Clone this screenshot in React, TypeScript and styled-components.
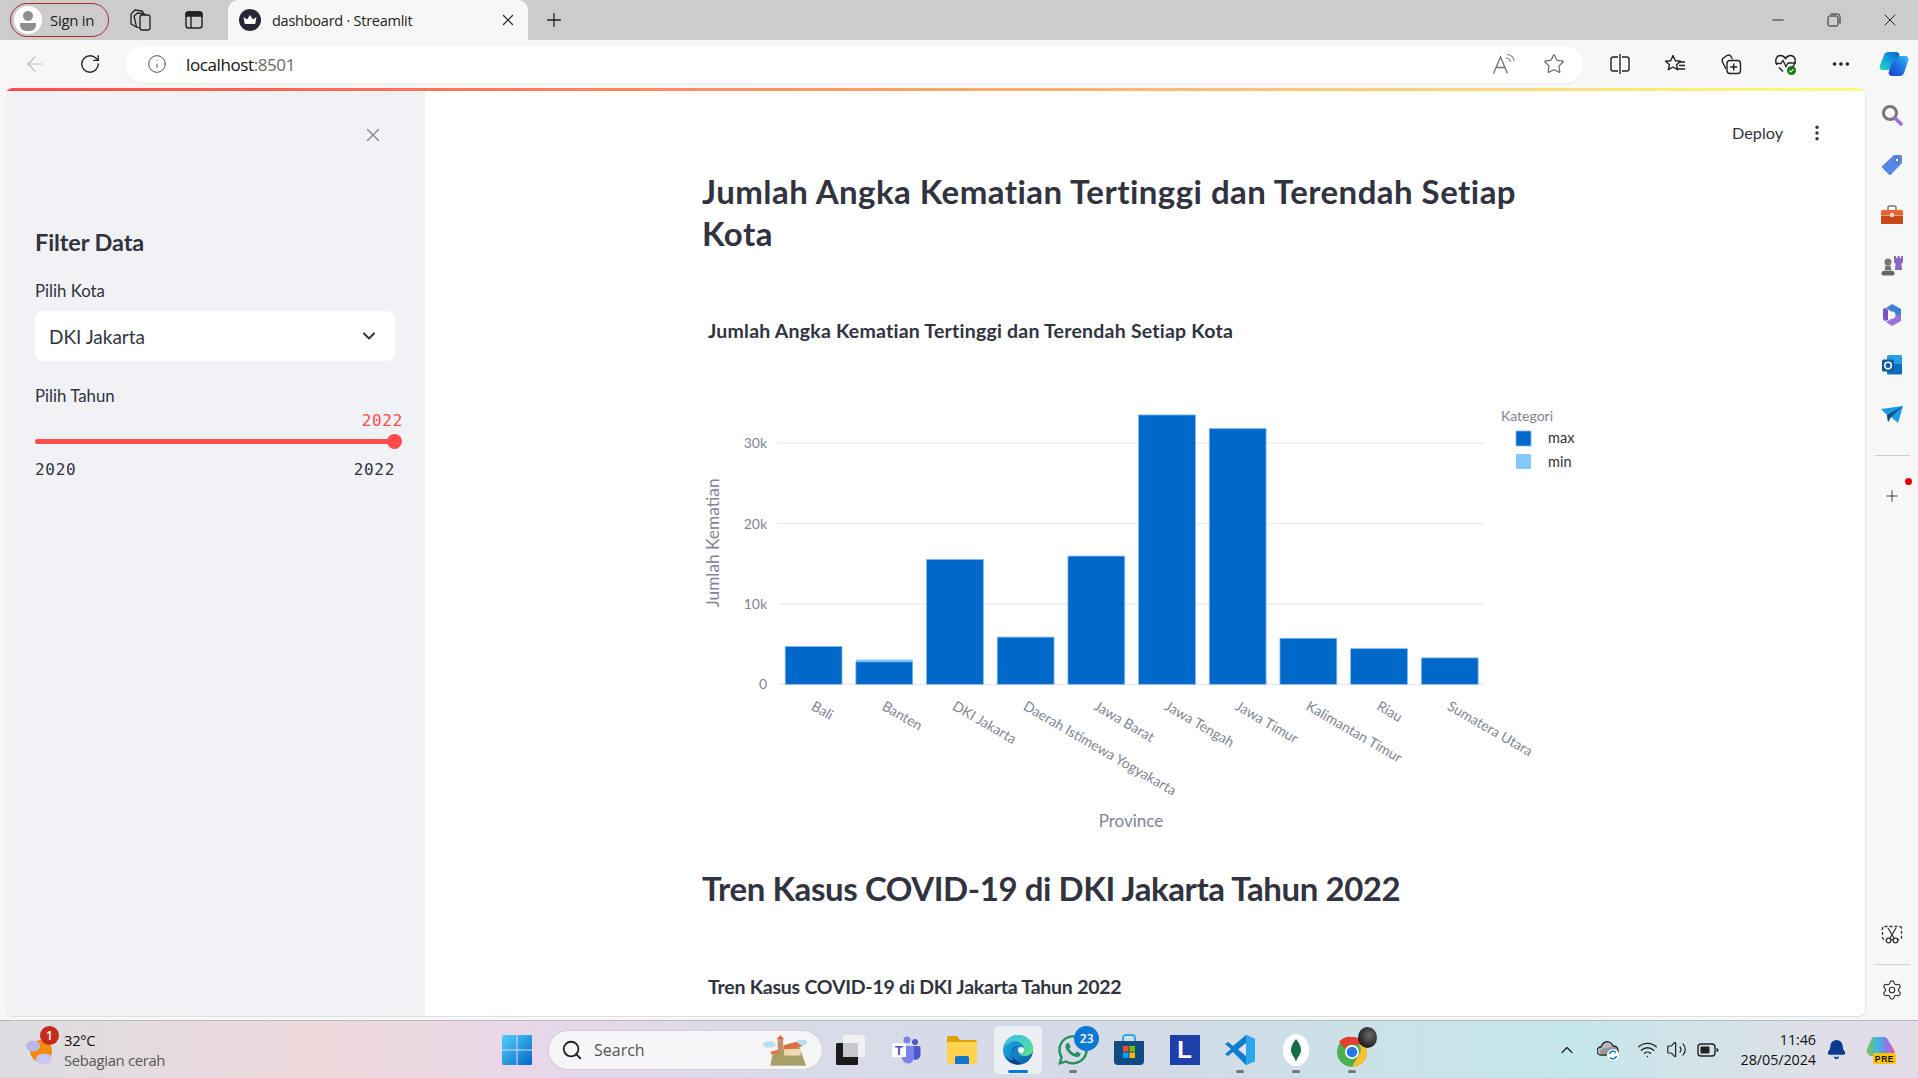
import React from 'react';
import styled, { createGlobalStyle } from 'styled-components';
import {
  ArrowLeft, Bell, ChevronDown, ChevronUp, EllipsisVertical, Ellipsis, Info, Minus, Plus, RotateCw,
  Search, Settings, Star, Volume2, Wifi, X,
} from 'lucide-react';
import { FaWhatsapp } from 'react-icons/fa';

const SANS = `Lato, "Noto Sans", sans-serif`;
const UI = `"Open Sans", "Noto Sans", sans-serif`;
const MONO = `"DejaVu Sans Mono", monospace`;

const GlobalStyle = createGlobalStyle`
  html, body { margin: 0; padding: 0; height: 100%; overflow: hidden; }
  * { box-sizing: border-box; }
  body { font-family: ${SANS}; color: #31333f; }
`;

const Browser = styled.div`
  width: 1918px;
  height: 1078px;
  display: flex;
  flex-direction: column;
  background: #f7f7f7;
`;

/* ---------- tab strip ---------- */
const TabStrip = styled.div`
  height: 40px;
  background: #cccccc;
  display: flex;
  align-items: center;
  padding-left: 10px;
  flex: none;
`;
const SignIn = styled.div`
  width: 99px;
  height: 34px;
  border: 1.5px solid #b02a2a;
  border-radius: 17px;
  display: flex;
  align-items: center;
  gap: 8px;
  padding-left: 3px;
  font: 400 15px ${UI};
  letter-spacing: -0.3px;
  color: #222;
`;
const Slot = styled.div<{ $w: number; $ml?: number }>`
  width: ${p => p.$w}px;
  margin-left: ${p => p.$ml ?? 0}px;
  height: 100%;
  flex: none;
  display: flex;
  align-items: center;
  justify-content: center;
  position: relative;
`;
const Tab = styled.div`
  width: 300px;
  height: 40px;
  background: #f7f7f7;
  border-radius: 10px 10px 0 0;
  display: flex;
  align-items: center;
  padding-left: 11px;
  flex: none;
`;
const TabTitle = styled.span`
  font: 400 14.5px ${UI};
  letter-spacing: -0.25px;
  color: #222;
  margin-left: 11px;
  flex: 1;
`;
const TabClose = styled.div`
  width: 40px;
  display: flex;
  justify-content: center;
`;
const WindowControls = styled.div`
  margin-left: auto;
  height: 100%;
  display: flex;
`;

/* ---------- address bar ---------- */
const Toolbar = styled.div`
  height: 48px;
  flex: none;
  display: flex;
  align-items: center;
  padding-left: 8px;
  background: #f7f7f7;
`;
const AddressBar = styled.div`
  width: 1459px;
  height: 37px;
  margin: 0 8px 0 8px;
  background: #fff;
  border-radius: 19px;
  box-shadow: 0 1px 2px rgba(0, 0, 0, 0.06);
  display: flex;
  align-items: center;
  padding-left: 22px;
  flex: none;
`;
const Url = styled.span`
  font: 400 17px ${UI};
  letter-spacing: -0.4px;
  color: #111;
  margin-left: 19px;
  flex: 1;
  span { color: #6a6a6a; }
`;

/* ---------- page ---------- */
const Body = styled.div`
  flex: 1;
  min-height: 0;
  display: flex;
  padding-left: 5px;
`;
const Page = styled.div`
  width: 1861px;
  height: 929px;
  background: #fff;
  border-radius: 8px;
  border-bottom: 1px solid #dedede;
  border-right: 1px solid #e6e6e6;
  overflow: hidden;
  display: flex;
  flex-direction: column;
  flex: none;
`;
const Decoration = styled.div`
  height: 3px;
  flex: none;
  background: linear-gradient(90deg, #ff4b4b, #fffd80);
`;
const Columns = styled.div`
  flex: 1;
  min-height: 0;
  display: flex;
`;

const Sidebar = styled.aside`
  width: 420px;
  flex: none;
  background: #f0f2f6;
  padding: 0 30px;
`;
const CloseRow = styled.div`
  height: 24px;
  margin: 33px 11px 0 0;
  display: flex;
  justify-content: flex-end;
  color: #808495;
`;
const FilterTitle = styled.h3`
  margin: 79px 0 0;
  height: 30px;
  font: 700 23.5px/30px ${SANS};
  letter-spacing: -0.1px;
  color: #31333f;
`;
const FieldLabel = styled.label<{ $top: number }>`
  display: block;
  margin-top: ${p => p.$top}px;
  height: 20px;
  font: 400 16.8px/20px ${SANS};
  color: #31333f;
`;
const Select = styled.div`
  margin-top: 10px;
  height: 50px;
  background: #fff;
  border-radius: 8px;
  display: flex;
  align-items: center;
  justify-content: space-between;
  padding: 0 16px 0 14px;
  font: 400 19px ${SANS};
  color: #31333f;
`;
const SliderValue = styled.div`
  margin: 5px -8px 0 0;
  height: 20px;
  text-align: right;
  font: 400 16px/20px ${MONO};
  letter-spacing: 0.7px;
  color: #ff4b4b;
`;
const SliderTrack = styled.div`
  position: relative;
  height: 5px;
  margin: 8px 0 5px;
  border-radius: 3px;
  background: #ff4b4b;
`;
const SliderThumb = styled.div`
  position: absolute;
  right: -7px;
  top: -5px;
  width: 15px;
  height: 15px;
  border-radius: 50%;
  background: #ff4b4b;
`;
const SliderEnds = styled.div`
  margin-top: 16px;
  display: flex;
  justify-content: space-between;
  font: 400 16px/20px ${MONO};
  letter-spacing: 0.7px;
  color: #31333f;
`;

const Main = styled.main`
  position: relative;
  flex: 1;
  min-width: 0;
  overflow: hidden;
`;
const StreamlitHeader = styled.div`
  position: absolute;
  top: 30px;
  right: 38px;
  display: flex;
  align-items: center;
  gap: 24px;
  font: 400 16.2px/24px ${SANS};
  color: #31333f;
`;
const Content = styled.div`
  width: 886px;
  margin: 0 auto;
  padding-top: 80px;
`;
const Heading = styled.h2<{ $tracking: number }>`
  margin: 0;
  width: 840px;
  font: 700 33px/41.5px ${SANS};
  letter-spacing: ${p => p.$tracking}px;
  color: #31333f;
`;
const ChartTitle = styled.h3<{ $tracking: number }>`
  margin: 65px 0 1px 6px;
  height: 24px;
  font: 700 19.5px/24px ${SANS};
  letter-spacing: ${p => p.$tracking}px;
  color: #31333f;
`;
const ChartSvg = styled.svg`
  display: block;
  width: 886px;
  height: 510px;
  margin-bottom: 14px;
`;

/* ---------- extensions rail ---------- */
const Rail = styled.div`
  flex: 1;
  display: flex;
  flex-direction: column;
  justify-content: space-between;
  align-items: center;
  padding: 2px 0 5px;
`;
const RailGroup = styled.div`
  display: flex;
  flex-direction: column;
  align-items: center;
`;
const RailItem = styled.div<{ $h?: number }>`
  position: relative;
  height: ${p => p.$h ?? 50}px;
  width: 52px;
  display: flex;
  align-items: center;
  justify-content: center;
`;
const RailRule = styled.div`
  width: 35px;
  height: 1px;
  background: #cfcfcf;
  flex: none;
`;
const RedDot = styled.span`
  position: absolute;
  top: 22px;
  right: 6px;
  width: 7px;
  height: 7px;
  border-radius: 50%;
  background: #e60000;
`;

/* ---------- taskbar ---------- */
const Taskbar = styled.div`
  height: 58px;
  flex: none;
  border-top: 1px solid #b7b9c2;
  background: linear-gradient(90deg, #dcdde2 0%, #efd9dc 17%, #e6d7ea 29%, #d9dce8 42%, #d3dbe6 60%, #c4e7ea 82%, #dde0e7 94%, #e2dbe8 100%);
  display: flex;
  align-items: center;
`;
const Weather = styled.div`
  width: 490px;
  flex: none;
  display: flex;
  align-items: center;
  padding-left: 25px;
  gap: 9px;
  position: relative;
`;
const WeatherText = styled.div`
  font: 400 14.8px/20px ${UI};
  letter-spacing: -0.3px;
  color: #111;
  small { display: block; font-size: 14.8px; color: #555; }
`;
const Badge = styled.span<{ $bg: string; $size: number; $top: number; $right: number }>`
  position: absolute;
  top: ${p => p.$top}px;
  right: ${p => p.$right}px;
  min-width: ${p => p.$size}px;
  height: ${p => p.$size}px;
  border-radius: 50%;
  background: ${p => p.$bg};
  color: #fff;
  font: 600 12px/${p => p.$size}px ${UI};
  text-align: center;
`;
const SearchBox = styled.div`
  width: 273px;
  height: 38px;
  margin: 0 1px 0 5px;
  flex: none;
  border-radius: 19px;
  background: #f6f6f8;
  box-shadow: 0 0 0 1px #d0d1d8;
  display: flex;
  align-items: center;
  padding: 0 14px 0 12px;
  gap: 11px;
  font: 400 16px ${UI};
  color: #555;
  span { flex: 1; }
`;
const TaskSlot = styled.div<{ $active?: boolean; $running?: boolean }>`
  position: relative;
  width: 55.67px;
  height: 48px;
  flex: none;
  display: flex;
  align-items: center;
  justify-content: center;
  border-radius: 5px;
  ${p => p.$active && `background: rgba(255,255,255,.55); width: 48px; margin: 0 3.8px;`}
  &::after {
    content: '';
    display: ${p => (p.$active || p.$running ? 'block' : 'none')};
    position: absolute;
    bottom: 1px;
    left: 50%;
    transform: translateX(-50%);
    width: ${p => (p.$active ? 20 : 8)}px;
    height: 3px;
    border-radius: 2px;
    background: ${p => (p.$active ? '#0a78d4' : '#777')};
  }
`;
const LogoL = styled.div`
  width: 30px;
  height: 30px;
  background: #1f3faa;
  color: #fff;
  font: 700 24px/30px "Liberation Sans", sans-serif;
  text-align: center;
`;
const Tray = styled.div`
  margin-left: auto;
  display: flex;
  align-items: center;
  padding-right: 12px;
`;
const TrayIcon = styled.div<{ $w: number }>`
  width: ${p => p.$w}px;
  display: flex;
  justify-content: center;
`;
const Clock = styled.div`
  width: 92px;
  text-align: right;
  font: 400 14.4px/20px ${UI};
  letter-spacing: -0.1px;
  color: #111;
`;
const ChromeAvatar = styled.span`
  position: absolute;
  top: 1px;
  right: 3px;
  width: 19px;
  height: 21px;
  border-radius: 50%;
  background: radial-gradient(circle at 60% 40%, #6a6a6a, #1e1e1e 70%);
`;

/* ---------- drawn icons ---------- */
const Favicon = () => (
  <svg width="22" height="22" viewBox="0 0 22 22">
    <circle cx="11" cy="11" r="11" fill="#262634" />
    <path d="M4.500 8l3.500 2.600L11 6l3 4.600L17.500 8l-1.300 7H5.800z" fill="#fff" />
  </svg>
);
const Avatar = () => (
  <svg width="28" height="28" viewBox="0 0 28 28">
    <circle cx="14" cy="14" r="14" fill="#fff" />
    <circle cx="14" cy="10" r="5" fill="#8f8f8f" />
    <path d="M6 17h16v2a6 6 0 0 1-6 6h-4a6 6 0 0 1-6-6z" fill="#8f8f8f" />
  </svg>
);
const CollectionsTabs = () => (
  <svg width="24" height="24" viewBox="0 0 24 24" fill="none" stroke="#222" strokeWidth="1.300" strokeLinejoin="round">
    <rect x="11" y="7" width="10" height="15" rx="2" />
    <path d="M11 20l-3.500-1L5 8l3.500-3 7 1 1 1" />
    <path d="M7.500 19L2 16 2 6l4-4 7 1 1.500 2" />
  </svg>
);
const VerticalTabs = () => (
  <svg width="20" height="20" viewBox="0 0 20 20" fill="none" stroke="#222" strokeWidth="1.400">
    <rect x="2" y="2" width="16" height="16" rx="2.500" />
    <path d="M2 4.500a2.500 2.500 0 0 1 2.500-2.500h11A2.500 2.500 0 0 1 18 4.500V6H2z" fill="#222" />
    <path d="M7 6v12" />
  </svg>
);
const Restore = () => (
  <svg width="14" height="14" viewBox="0 0 14 14" fill="none" stroke="#222" strokeWidth="1">
    <rect x="1" y="3" width="10" height="10" rx="1.500" />
    <path d="M3.500 1h7a2.500 2.500 0 0 1 2.500 2.500v7" />
  </svg>
);
const ReadAloud = () => (
  <svg width="24" height="22" viewBox="0 0 24 22" fill="none" stroke="#777" strokeWidth="1.400">
    <path d="M1.500 20.500L8.500 4l7 16.500M4 14.500h9" />
    <path d="M14 5c2.500.2 4 1.500 4.500 4M15 1.500c3.800.3 6.500 2.600 7 6.500" strokeWidth="1.100" />
  </svg>
);
const SplitScreen = () => (
  <svg width="20" height="22" viewBox="0 0 20 22" fill="none" stroke="#222" strokeWidth="1.400">
    <path d="M8 4H3a2 2 0 0 0-2 2v10a2 2 0 0 0 2 2h5M12 4h5a2 2 0 0 1 2 2v10a2 2 0 0 1-2 2h-5" />
    <path d="M10 1v20" />
  </svg>
);
const Favorites = () => (
  <svg width="22" height="22" viewBox="0 0 22 22" fill="none" stroke="#222" strokeWidth="1.400">
    <path d="M9 2.500l2.300 5.200 5.200.5-3.900 3.500 1 5-4.600-2.700-4.600 2.700 1-5.200L1.500 8.200l5.200-.5z" strokeLinejoin="round" />
    <path d="M15 9h6M15 12.500h6M13 16h8" />
  </svg>
);
const Collections = () => (
  <svg width="22" height="22" viewBox="0 0 22 22" fill="none" stroke="#222" strokeWidth="1.400">
    <path d="M6 16L2.500 9c-1-2 0-3.500 1.500-4.500l3-2c1.500-.8 3-.5 4 1L12.500 6" />
    <rect x="7" y="7.500" width="13.500" height="13" rx="3" />
    <path d="M13.700 10.500v7M10.200 14h7" />
  </svg>
);
const HeartPulse = () => (
  <svg width="24" height="24" viewBox="0 0 24 24" fill="none">
    <path d="M3 13C.5 9 2 3.500 6.500 3.500c2.500 0 4 1.500 5 3 1-1.500 2.800-3 5-3 4.500 0 6 5 3.500 9.500l-2 2.500M5 15.500l4 4" stroke="#222" strokeWidth="1.400" />
    <path d="M1.500 11.500H7l2-3 3 6 2-3.500h8" stroke="#222" strokeWidth="1.300" />
    <circle cx="17.500" cy="18.500" r="4.500" fill="#107c10" />
    <path d="M15.500 18.500l1.500 1.500 2.500-2.800" stroke="#fff" strokeWidth="1.100" />
  </svg>
);
const Copilot = ({ size }: { size: number }) => (
  <svg width={size} height={size} viewBox="0 0 30 30">
    <defs>
      <linearGradient id="cpA" x1="0" y1="1" x2="1" y2="0">
        <stop offset="0" stopColor="#22dcc0" />
        <stop offset=".6" stopColor="#1490e0" />
        <stop offset="1" stopColor="#0f5fb8" />
      </linearGradient>
      <linearGradient id="cpB" x1="0" y1="1" x2="1" y2="0">
        <stop offset="0" stopColor="#2238c8" />
        <stop offset=".6" stopColor="#1f7fe8" />
        <stop offset="1" stopColor="#38c8f5" />
      </linearGradient>
    </defs>
    <path d="M9 3h8c2 0 3 1 3.500 3L17 18c-.5 2-1.500 3-3.500 3H4c-3 0-4-2-3-5L5 6c.8-2 2-3 4-3z" fill="url(#cpA)" />
    <path d="M20 7h6c3 0 4 2 3 5l-4 12c-.8 2-2 3-4 3h-8c-2 0-3-1-3.500-3L13 14c.5-2 1.500-3 3.500-3z" fill="url(#cpB)" />
  </svg>
);
const CopilotPre = () => (
  <svg width="30" height="28" viewBox="0 0 30 28">
    <defs>
      <linearGradient id="cpC" x1="0" y1="0" x2="1" y2="0">
        <stop offset="0" stopColor="#8ac04a" />
        <stop offset=".4" stopColor="#36b8e8" />
        <stop offset=".7" stopColor="#8a7ae0" />
        <stop offset="1" stopColor="#e05cc0" />
      </linearGradient>
    </defs>
    <path d="M8 1h10c2 0 3 1 4 3l6 10c1 2 1 4-1 6H4C1 18 0 15 1 13l4-9c1-2 1-3 3-3z" fill="url(#cpC)" />
    <rect x="7" y="17" width="23" height="11" rx="2" fill="#ffc400" />
    <text x="18.500" y="26" textAnchor="middle" fontFamily="Liberation Sans" fontWeight="700" fontSize="8.500" letterSpacing=".6" fill="#111">PRE</text>
  </svg>
);
const RailSearch = () => (
  <svg width="22" height="22" viewBox="0 0 22 22" fill="none">
    <circle cx="9" cy="9" r="6.500" stroke="#777" strokeWidth="3" />
    <path d="M14 14l6 6" stroke="#9a6fd0" strokeWidth="3.500" strokeLinecap="round" />
  </svg>
);
const RailTag = () => (
  <svg width="22" height="22" viewBox="0 0 22 22">
    <path d="M13 1h6.500A1.500 1.500 0 0 1 21 2.500V9L10 20.500c-.7.700-1.500.7-2.200 0L1.500 14c-.7-.7-.7-1.500 0-2.200z" fill="#5686e3" />
    <circle cx="16" cy="6" r="2" fill="#fff" stroke="#2f57ac" />
  </svg>
);
const RailToolbox = () => (
  <svg width="24" height="22" viewBox="0 0 24 22">
    <path d="M8 6V3.500A1.500 1.500 0 0 1 9.500 2h5A1.500 1.500 0 0 1 16 3.500V6" fill="none" stroke="#777" strokeWidth="1.500" />
    <path d="M1 7.500A1.500 1.500 0 0 1 2.500 6h19A1.500 1.500 0 0 1 23 7.500V11H1z" fill="#e8622c" />
    <path d="M1 11.500h22V19a1 1 0 0 1-1 1H2a1 1 0 0 1-1-1z" fill="#c9481a" />
    <rect x="10" y="9" width="4" height="4" rx="1" fill="#d8d8d8" />
  </svg>
);
const RailChess = () => (
  <svg width="24" height="24" viewBox="0 0 24 24">
    <path d="M14 3h2v2h1.500V3h2v2H21V3h2v6l-1.500 2 .5 6H15l.500-6L14 9z" fill="#8a68c0" />
    <circle cx="8" cy="9" r="3.500" fill="#777" />
    <path d="M5.500 12.500h5l1 5H4.500z" fill="#777" />
    <rect x="1.500" y="18" width="13" height="4.500" rx="2" fill="#666" />
  </svg>
);
const Rail365 = () => (
  <svg width="22" height="24" viewBox="0 0 22 24" fill="none">
    <path d="M11 1l9 5v6H14c0-2-1-3-3-3L5 5z" fill="#3f7fd8" />
    <path d="M2 6l3-1 2 2v10l-3 1-2-2z" fill="#7a52c4" />
    <path d="M20 12v6l-9 5-6-4 5-3c2 0 4-1 4-4z" fill="#9a70dc" />
    <circle cx="11" cy="12" r="3.500" fill="#f7f7f7" />
  </svg>
);
const RailOutlook = () => (
  <svg width="22" height="22" viewBox="0 0 22 22">
    <rect x="6" y="1" width="15" height="19" rx="1.500" fill="#2a9de4" />
    <path d="M6 10l15 0v9a1.500 1.500 0 0 1-1.500 1.500H7.500A1.500 1.500 0 0 1 6 19z" fill="#0f6cbd" />
    <rect x="1" y="5.500" width="12" height="12" rx="1.500" fill="#0a5a9e" />
    <circle cx="7" cy="11.500" r="3.300" fill="none" stroke="#fff" strokeWidth="1.600" />
  </svg>
);
const RailSend = () => (
  <svg width="22" height="18" viewBox="0 0 22 18">
    <path d="M0 3l22-3-5 17-7-6-3 5-1-7z" fill="#1c9be6" />
    <path d="M6 9l16-9-12 11-3 5z" fill="#14507e" />
  </svg>
);
const RailCapture = () => (
  <svg width="22" height="20" viewBox="0 0 22 20" fill="none" stroke="#333" strokeWidth="1.300">
    <rect x="1.500" y="1.500" width="19" height="13" rx="2" strokeDasharray="3 2" />
    <path d="M7 3l6 10M15 3L9 13" />
    <circle cx="7.500" cy="15.500" r="2.300" fill="#f7f7f7" />
    <circle cx="14.500" cy="15.500" r="2.300" fill="#f7f7f7" />
  </svg>
);
const WeatherIcon = () => (
  <svg width="30" height="32" viewBox="0 0 30 32">
    <circle cx="16" cy="17" r="11" fill="#f58a12" />
    <ellipse cx="8" cy="12" rx="7" ry="5.500" fill="#b9b8ec" />
    <ellipse cx="19" cy="25" rx="8" ry="5.500" fill="#c9c7f2" />
  </svg>
);
const StartLogo = () => (
  <svg width="30" height="30" viewBox="0 0 30 30">
    <defs>
      <linearGradient id="win" x1="0" y1="0" x2="1" y2="1">
        <stop offset="0" stopColor="#4fd0fb" />
        <stop offset="1" stopColor="#0569c8" />
      </linearGradient>
    </defs>
    <path d="M0 1.500A1.500 1.500 0 0 1 1.500 0h13v14.500H0zM15.500 0h13A1.500 1.500 0 0 1 30 1.500v13H15.500zM0 15.500h14.500V30h-13A1.500 1.500 0 0 1 0 28.500zM15.500 15.500H30v13a1.500 1.500 0 0 1-1.500 1.500h-13z" fill="url(#win)" />
  </svg>
);
const SearchScene = () => (
  <svg width="46" height="34" viewBox="0 0 50 34">
    <ellipse cx="8" cy="11" rx="7" ry="3.500" fill="#b9dff2" />
    <ellipse cx="43" cy="9" rx="6" ry="3.500" fill="#b9dff2" />
    <path d="M9 34l3-16 28-6 8 22z" fill="#a8a068" />
    <rect x="17" y="4" width="6" height="14" fill="#c8906a" />
    <path d="M16 5l4-4 4 4z" fill="#d8603a" />
    <path d="M23 12l14-4 7 5-20 5z" fill="#dc7040" />
    <rect x="24" y="16" width="18" height="7" fill="#efd9b0" />
    <path d="M9 19l8-2 3 3-10 2z" fill="#e07a48" />
  </svg>
);
const TaskView = () => (
  <svg width="30" height="30" viewBox="0 0 30 30">
    <rect x="0" y="8" width="22" height="22" rx="1.500" fill="#1b1b1b" />
    <rect x="7" y="0" width="22" height="22" rx="1.500" fill="#f2f2f4" opacity=".92" />
    <rect x="7" y="8" width="15" height="14" fill="#c8c8cc" />
  </svg>
);
const Teams = () => (
  <svg width="30" height="28" viewBox="0 0 30 28">
    <circle cx="16" cy="4" r="3.500" fill="#7b83eb" />
    <circle cx="24" cy="6" r="3" fill="#5059c9" />
    <path d="M20 10h8a1.500 1.500 0 0 1 1.500 1.500V19a5 5 0 0 1-7 4.500z" fill="#5059c9" />
    <path d="M10 10h12a1 1 0 0 1 1 1v10a6 6 0 0 1-12 1z" fill="#7b83eb" />
    <rect x="1" y="7" width="14" height="14" fill="#fff" />
    <text x="8" y="18.500" textAnchor="middle" fontFamily="Liberation Sans" fontWeight="700" fontSize="13" fill="#4b53bc">T</text>
  </svg>
);
const Folder = () => (
  <svg width="30" height="28" viewBox="0 0 30 28">
    <path d="M0 2a2 2 0 0 1 2-2h8l3 4h15a2 2 0 0 1 2 2v4H0z" fill="#e0a106" />
    <path d="M0 6h30v20a2 2 0 0 1-2 2H2a2 2 0 0 1-2-2z" fill="#ffd34f" />
    <path d="M8 22a2 2 0 0 1 2-2h10a2 2 0 0 1 2 2v6H8z" fill="#1277c6" />
  </svg>
);
const EdgeLogo = () => (
  <svg width="30" height="30" viewBox="0 0 30 30">
    <defs>
      <linearGradient id="edA" x1="0" y1="0" x2="1" y2="1">
        <stop offset="0" stopColor="#1fb4e8" />
        <stop offset="1" stopColor="#0c59a4" />
      </linearGradient>
      <linearGradient id="edB" x1="0" y1="0" x2="1" y2="1">
        <stop offset="0" stopColor="#35c1f1" />
        <stop offset="1" stopColor="#5fe08a" />
      </linearGradient>
    </defs>
    <circle cx="15" cy="15" r="15" fill="url(#edA)" />
    <path d="M15 0c9 0 15 6 15 14 0 5-4 7-8 7-3 0-6-1-6-3 3 0 5-1 5-4 0-4-4-8-10-8C7 6 3 10 1 13 2 5 8 0 15 0z" fill="url(#edB)" />
    <path d="M15 11c-3 0-6 3-6 7s4 9 10 10c-6 3-14 0-17-8 2 4 6 6 9 5-3-3-3-11 4-14z" fill="#0b3f86" />
    <circle cx="18" cy="15" r="3" fill="#f4f5fb" />
  </svg>
);
const Store = () => (
  <svg width="30" height="32" viewBox="0 0 30 32">
    <path d="M9 7V4a3 3 0 0 1 3-3h6a3 3 0 0 1 3 3v3" fill="none" stroke="#33a8e8" strokeWidth="2" />
    <path d="M0 7h30v20a4 4 0 0 1-4 4H4a4 4 0 0 1-4-4z" fill="#124a82" />
    <rect x="9" y="12" width="5.500" height="5.500" fill="#f25022" />
    <rect x="15.500" y="12" width="5.500" height="5.500" fill="#7fba00" />
    <rect x="9" y="18.500" width="5.500" height="5.500" fill="#00a4ef" />
    <rect x="15.500" y="18.500" width="5.500" height="5.500" fill="#ffb900" />
  </svg>
);
const VsCode = () => (
  <svg width="30" height="30" viewBox="0 0 30 30">
    <path d="M21 0l9 4v22l-9 4L8 17l-5 4-3-2 6-5-6-5 3-2 5 4z" fill="#0f7ccc" />
    <path d="M21 0l9 4v22l-9 4z" fill="#29a8ef" />
    <path d="M21 8l-8 6.500 8 6.500z" fill="#dfe0ea" />
  </svg>
);
const Mongo = () => (
  <svg width="28" height="32" viewBox="0 0 28 32">
    <ellipse cx="14" cy="16" rx="13" ry="16" fill="#fff" />
    <path d="M14 5c3 4 5 7 5 11s-3 7-4 9l-1 3-1-3c-1-2-4-5-4-9s2-7 5-11z" fill="#136c4c" />
  </svg>
);
const Chrome = () => (
  <svg width="30" height="34" viewBox="0 0 30 34">
    <circle cx="15" cy="19" r="15" fill="#4caf50" />
    <path d="M15 4a15 15 0 0 1 13 7.500H15a7.500 7.500 0 0 0-7 4.500L2 8.700A15 15 0 0 1 15 4z" fill="#e53d30" />
    <path d="M28 11.500A15 15 0 0 1 15 34l6.500-11.500a7.500 7.500 0 0 0 0-11z" fill="#fbc02d" />
    <circle cx="15" cy="19" r="7" fill="#fff" />
    <circle cx="15" cy="19" r="5.300" fill="#2a75e8" />
  </svg>
);
const OneDrive = () => (
  <svg width="24" height="22" viewBox="0 0 24 22">
    <path d="M4 16a4 4 0 0 1 0-8c1-4 5-6 8-5 2 .6 3.500 2 4 4 3 0 5 2 5 5 0 2-1 4-3 4z" fill="#b9bcc2" stroke="#222" strokeWidth="1.300" />
    <path d="M3 12c1-2 6-4 16-4v8H4z" fill="#777" opacity=".55" />
    <circle cx="16" cy="16" r="6" fill="#fff" />
    <path d="M12.500 15a3.800 3.800 0 0 1 6.500-1.500M19.500 17a3.800 3.800 0 0 1-6.500 1.500" fill="none" stroke="#0a78d4" strokeWidth="1.500" />
  </svg>
);
const BatteryIcon = () => (
  <svg width="22" height="14" viewBox="0 0 22 14" fill="none">
    <rect x="1" y="1" width="17" height="12" rx="3" stroke="#222" strokeWidth="1.400" />
    <rect x="3.500" y="3.500" width="9" height="7" rx="1" fill="#222" />
    <path d="M19.500 5v4c1 0 2-1 2-2s-1-2-2-2z" fill="#222" />
  </svg>
);

/* ---------- chart ---------- */
const Y0 = 683.3;
const PX_PER_K = 8.04;
const provinces = [
  { name: 'Bali', max: 4.7 },
  { name: 'Banten', max: 2.8, min: 0.28 },
  { name: 'DKI Jakarta', max: 15.51 },
  { name: 'Daerah Istimewa Yogyakarta', max: 5.87 },
  { name: 'Jawa Barat', max: 15.95 },
  { name: 'Jawa Tengah', max: 33.5 },
  { name: 'Jawa Timur', max: 31.8 },
  { name: 'Kalimantan Timur', max: 5.72 },
  { name: 'Riau', max: 4.43 },
  { name: 'Sumatera Utara', max: 3.28 },
];
const ticks = [
  { label: '0', v: 0 },
  { label: '10k', v: 10 },
  { label: '20k', v: 20 },
  { label: '30k', v: 30 },
];

const DeathsChart = () => (
  <ChartSvg viewBox="702 343 886 510">
    <g fontFamily={SANS} fontSize="14" fill="#808495">
      {ticks.map(t => (
        <g key={t.label}>
          <line x1="778" x2="1484" y1={Y0 - t.v * PX_PER_K} y2={Y0 - t.v * PX_PER_K} stroke="#e6eaf1" strokeWidth="1.2" />
          <text x="767" y={Y0 - t.v * PX_PER_K + 5} textAnchor="end">{t.label}</text>
        </g>
      ))}
      {provinces.map((p, i) => {
        const x = 785.2 + i * 70.68;
        const top = Y0 - p.max * PX_PER_K;
        return (
          <g key={p.name}>
            {p.min && (
              <rect x={x} y={top - p.min * PX_PER_K} width="56.800" height={p.min * PX_PER_K} fill="#83c9ff" />
            )}
            <rect x={x} y={top} width="56.800" height={p.max * PX_PER_K} fill="#0068c9" stroke="#7fb8ee" strokeWidth=".8" />
            <text transform={`translate(${x + 25} 708) rotate(30)`}>{p.name}</text>
          </g>
        );
      })}
      <text transform="translate(719 542) rotate(-90)" textAnchor="middle" fontSize="17.300">Jumlah Kematian</text>
      <text x="1131" y="826" textAnchor="middle" fontSize="17">Province</text>
      <text x="1501" y="420">Kategori</text>
    </g>
    <rect x="1516" y="430" width="15" height="15" fill="#0068c9" stroke="#7fb8ee" strokeWidth=".8" />
    <rect x="1516" y="453" width="15" height="15" fill="#83c9ff" />
    <g fontFamily={SANS} fontSize="14.500" fill="#31333f">
      <text x="1548" y="442">max</text>
      <text x="1548" y="466">min</text>
    </g>
  </ChartSvg>
);

const App: React.FC = () => (
  <Browser>
    <GlobalStyle />
    <TabStrip>
      <SignIn><Avatar />Sign in</SignIn>
      <Slot $w={53} $ml={5}><CollectionsTabs /></Slot>
      <Slot $w={53}><VerticalTabs /></Slot>
      <Slot $w={8} />
      <Tab>
        <Favicon />
        <TabTitle>dashboard · Streamlit</TabTitle>
        <TabClose><X size={18} strokeWidth={1.6} color="#222" /></TabClose>
      </Tab>
      <Slot $w={52}><Plus size={22} strokeWidth={1.4} color="#222" /></Slot>
      <WindowControls>
        <Slot $w={56}><Minus size={18} strokeWidth={1.2} color="#222" /></Slot>
        <Slot $w={56}><Restore /></Slot>
        <Slot $w={56}><X size={20} strokeWidth={1.2} color="#222" /></Slot>
      </WindowControls>
    </TabStrip>

    <Toolbar>
      <Slot $w={54}><ArrowLeft size={24} strokeWidth={1.2} color="#bdbdbd" /></Slot>
      <Slot $w={55}><RotateCw size={22} strokeWidth={1.5} color="#222" /></Slot>
      <AddressBar>
        <Info size={20} strokeWidth={1.2} color="#555" />
        <Url>localhost<span>:8501</span></Url>
        <Slot $w={50}><ReadAloud /></Slot>
        <Slot $w={50}><Star size={22} strokeWidth={1.3} color="#666" /></Slot>
        <Slot $w={5} />
      </AddressBar>
      <Slot $w={55}><SplitScreen /></Slot>
      <Slot $w={56}><Favorites /></Slot>
      <Slot $w={55}><Collections /></Slot>
      <Slot $w={55}><HeartPulse /></Slot>
      <Slot $w={55}><Ellipsis size={22} strokeWidth={2} color="#222" /></Slot>
      <Slot $w={51}><Copilot size={30} /></Slot>
    </Toolbar>

    <Body>
      <Page>
        <Decoration />
        <Columns>
          <Sidebar>
            <CloseRow><X size={22} strokeWidth={1.5} /></CloseRow>
            <FilterTitle>Filter Data</FilterTitle>
            <FieldLabel $top={24}>Pilih Kota</FieldLabel>
            <Select>
              DKI Jakarta
              <ChevronDown size={20} strokeWidth={2.4} color="#31333f" />
            </Select>
            <FieldLabel $top={25}>Pilih Tahun</FieldLabel>
            <SliderValue>2022</SliderValue>
            <SliderTrack><SliderThumb /></SliderTrack>
            <SliderEnds><span>2020</span><span>2022</span></SliderEnds>
          </Sidebar>
          <Main>
            <StreamlitHeader>
              Deploy
              <EllipsisVertical size={20} strokeWidth={2.2} color="#31333f" />
            </StreamlitHeader>
            <Content>
              <Heading $tracking={0.46}>Jumlah Angka Kematian Tertinggi dan Terendah Setiap Kota</Heading>
              <ChartTitle $tracking={0.22}>Jumlah Angka Kematian Tertinggi dan Terendah Setiap Kota</ChartTitle>
              <DeathsChart />
              <Heading $tracking={-0.42}>Tren Kasus COVID-19 di DKI Jakarta Tahun 2022</Heading>
              <ChartTitle $tracking={-0.23}>Tren Kasus COVID-19 di DKI Jakarta Tahun 2022</ChartTitle>
            </Content>
          </Main>
        </Columns>
      </Page>
      <Rail>
        <RailGroup>
          <RailItem><RailSearch /></RailItem>
          <RailItem><RailTag /></RailItem>
          <RailItem><RailToolbox /></RailItem>
          <RailItem><RailChess /></RailItem>
          <RailItem><Rail365 /></RailItem>
          <RailItem><RailOutlook /></RailItem>
          <RailItem><RailSend /></RailItem>
          <RailItem $h={15} />
          <RailRule />
          <RailItem $h={80}><Plus size={18} strokeWidth={1.2} color="#333" /><RedDot /></RailItem>
        </RailGroup>
        <RailGroup>
          <RailItem $h={58}><RailCapture /></RailItem>
          <RailRule />
          <RailItem $h={50}><Settings size={22} strokeWidth={1.3} color="#333" /></RailItem>
        </RailGroup>
      </Rail>
    </Body>

    <Taskbar>
      <Weather>
        <WeatherIcon />
        <Badge $bg="#c42b1c" $size={19} $top={-4} $right={431}>1</Badge>
        <WeatherText>32°C<small>Sebagian cerah</small></WeatherText>
      </Weather>
      <Slot $w={54}><StartLogo /></Slot>
      <SearchBox>
        <Search size={22} strokeWidth={2} color="#222" />
        <span>Search</span>
        <SearchScene />
      </SearchBox>
      <TaskSlot><TaskView /></TaskSlot>
      <TaskSlot><Teams /></TaskSlot>
      <TaskSlot><Folder /></TaskSlot>
      <TaskSlot $active><EdgeLogo /></TaskSlot>
      <TaskSlot $running>
        <FaWhatsapp size={34} color="#25915a" />
        <Badge $bg="#0a78d4" $size={25} $top={0} $right={2}>23</Badge>
      </TaskSlot>
      <TaskSlot><Store /></TaskSlot>
      <TaskSlot><LogoL>L</LogoL></TaskSlot>
      <TaskSlot $running><VsCode /></TaskSlot>
      <TaskSlot $running><Mongo /></TaskSlot>
      <TaskSlot $running><Chrome /><ChromeAvatar /></TaskSlot>
      <Tray>
        <TrayIcon $w={30}><ChevronUp size={20} strokeWidth={1.6} color="#222" /></TrayIcon>
        <TrayIcon $w={53}><OneDrive /></TrayIcon>
        <TrayIcon $w={25}><Wifi size={21} strokeWidth={1.6} color="#222" /></TrayIcon>
        <TrayIcon $w={32}><Volume2 size={21} strokeWidth={1.4} color="#222" /></TrayIcon>
        <TrayIcon $w={32}><BatteryIcon /></TrayIcon>
        <Clock>11:46<br />28/05/2024</Clock>
        <TrayIcon $w={40}><Bell size={21} fill="#0b3a8f" color="#0b3a8f" /></TrayIcon>
        <TrayIcon $w={50}><CopilotPre /></TrayIcon>
      </Tray>
    </Taskbar>
  </Browser>
);

export default App;
